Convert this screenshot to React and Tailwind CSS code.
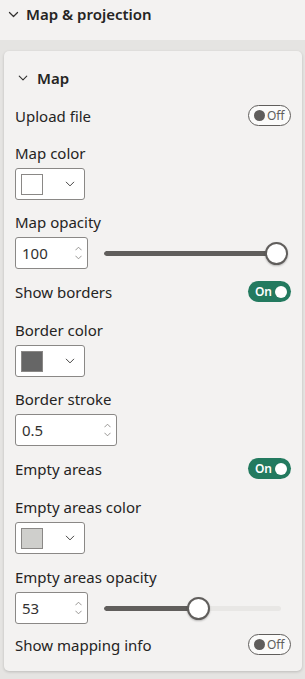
import React from "react";

const Chevron = ({ className, width = 1.6 }) => (
  <svg viewBox="0 0 16 16" className={className} fill="none" stroke="currentColor" strokeWidth={width} strokeLinecap="round" strokeLinejoin="round">
    <path d="M3 5.5 L8 10.5 L13 5.5" />
  </svg>
);

const Toggle = ({ on }) =>
  on ? (
    <div className="w-[43px] h-[21px] rounded-full bg-[#237a5f] flex items-center justify-end pr-[4px] gap-[3px]">
      <span className="text-[12px] font-semibold text-white leading-none">On</span>
      <span className="w-[12px] h-[12px] rounded-full bg-white" />
    </div>
  ) : (
    <div className="w-[43px] h-[21px] rounded-full border border-[#605e5c] bg-[#fbfbfa] flex items-center pl-[5px] gap-[2px]">
      <span className="w-[11px] h-[11px] rounded-full bg-[#605e5c]" />
      <span className="text-[12px] text-[#605e5c] leading-none">Off</span>
    </div>
  );

const ToggleRow = ({ label, on, className }) => (
  <div className={"flex items-center justify-between h-[21px] pr-[11px] " + (className || "")}>
    <span className="leading-5">{label}</span>
    <Toggle on={on} />
  </div>
);

const Label = ({ children, className }) => (
  <div className={"leading-5 " + (className || "")}>{children}</div>
);

const ColorPicker = ({ swatch }) => (
  <div className="mt-[5px] w-[70px] h-[32px] border border-[#8a8886] rounded-[3px] bg-white flex items-center pl-[5px] pr-[8px] justify-between">
    <div className={"w-[22px] h-[21px] border border-[#8a8886] " + swatch} />
    <Chevron className="w-[12px] h-[12px] text-[#323130]" width={1.2} />
  </div>
);

const Spin = ({ value, width }) => (
  <div className={"h-[32px] border border-[#8a8886] rounded-[3px] bg-white flex items-center justify-between pl-[6px] pr-[5px] " + width}>
    <span className="text-[15px] text-[#323130]">{value}</span>
    <div className="flex flex-col items-center gap-[4px] text-[#8a8886]">
      <svg viewBox="0 0 8 5" className="w-[7px] h-[5px]" fill="none" stroke="currentColor" strokeWidth="1">
        <path d="M0.5 4.5 L4 1 L7.5 4.5" />
      </svg>
      <svg viewBox="0 0 8 5" className="w-[7px] h-[5px]" fill="none" stroke="currentColor" strokeWidth="1">
        <path d="M0.5 0.5 L4 4 L7.5 0.5" />
      </svg>
    </div>
  </div>
);

const Slider = ({ percent }) => (
  <div className="relative flex-1 h-[22px] ml-[16px] mr-[21px] flex items-center">
    <div className="w-full h-[5px] rounded-full bg-[#e8e7e5] overflow-hidden">
      <div className="h-full bg-[#605e5c] rounded-full" style={{ width: percent + "%" }} />
    </div>
    <div
      className="absolute top-0 w-[23px] h-[23px] rounded-full bg-white border-2 border-[#605e5c] shadow-[0_1px_2px_rgba(0,0,0,0.25)]"
      style={{ left: `calc(${percent}% - 11px)` }}
    />
  </div>
);

export default function App() {
  return (
    <div
      className="w-[305px] h-[679px] bg-[#e5e4e2] text-[#252423] text-[15px] overflow-hidden"
      style={{ fontFamily: "'Segoe UI', 'Noto Sans', 'Open Sans', sans-serif" }}
    >
      <div className="h-[40px] bg-[#f3f2f1] pl-[7px] pt-[3px]">
        <div className="flex items-center gap-[6px] h-[22px]">
          <Chevron className="w-[13px] h-[13px] text-[#323130]" width={1.5} />
          <span className="text-[15px] font-semibold leading-none">Map &amp; projection</span>
        </div>
      </div>

      <div className="ml-[4px] mr-[3px] mt-[11px] h-[620px] bg-[#f3f2f1] rounded-[5px] shadow-[0_1px_3px_rgba(0,0,0,0.18)] pl-[11px] pt-[17px]">
        <div className="flex items-center gap-[8px] h-[20px] pl-[2px]">
          <Chevron className="w-[12px] h-[12px] text-[#323130]" width={1.5} />
          <span className="font-semibold">Map</span>
        </div>

        <ToggleRow label="Upload file" on={false} className="mt-[17px]" />

        <Label className="mt-[17px]">Map color</Label>
        <ColorPicker swatch="bg-white" />

        <Label className="mt-[12px]">Map opacity</Label>
        <div className="mt-[5px] flex items-center">
          <Spin value="100" width="w-[73px]" />
          <Slider percent={97} />
        </div>

        <ToggleRow label="Show borders" on className="mt-[12px]" />

        <Label className="mt-[18px]">Border color</Label>
        <ColorPicker swatch="bg-[#666666]" />

        <Label className="mt-[12px]">Border stroke</Label>
        <div className="mt-[5px] flex">
          <Spin value="0.5" width="w-[102px]" />
        </div>

        <ToggleRow label="Empty areas" on className="mt-[12px]" />

        <Label className="mt-[18px]">Empty areas color</Label>
        <ColorPicker swatch="bg-[#cfcfcc]" />

        <Label className="mt-[13px]">Empty areas opacity</Label>
        <div className="mt-[5px] flex items-center">
          <Spin value="53" width="w-[73px]" />
          <Slider percent={53} />
        </div>

        <ToggleRow label="Show mapping info" on={false} className="mt-[10px]" />
      </div>
    </div>
  );
}
